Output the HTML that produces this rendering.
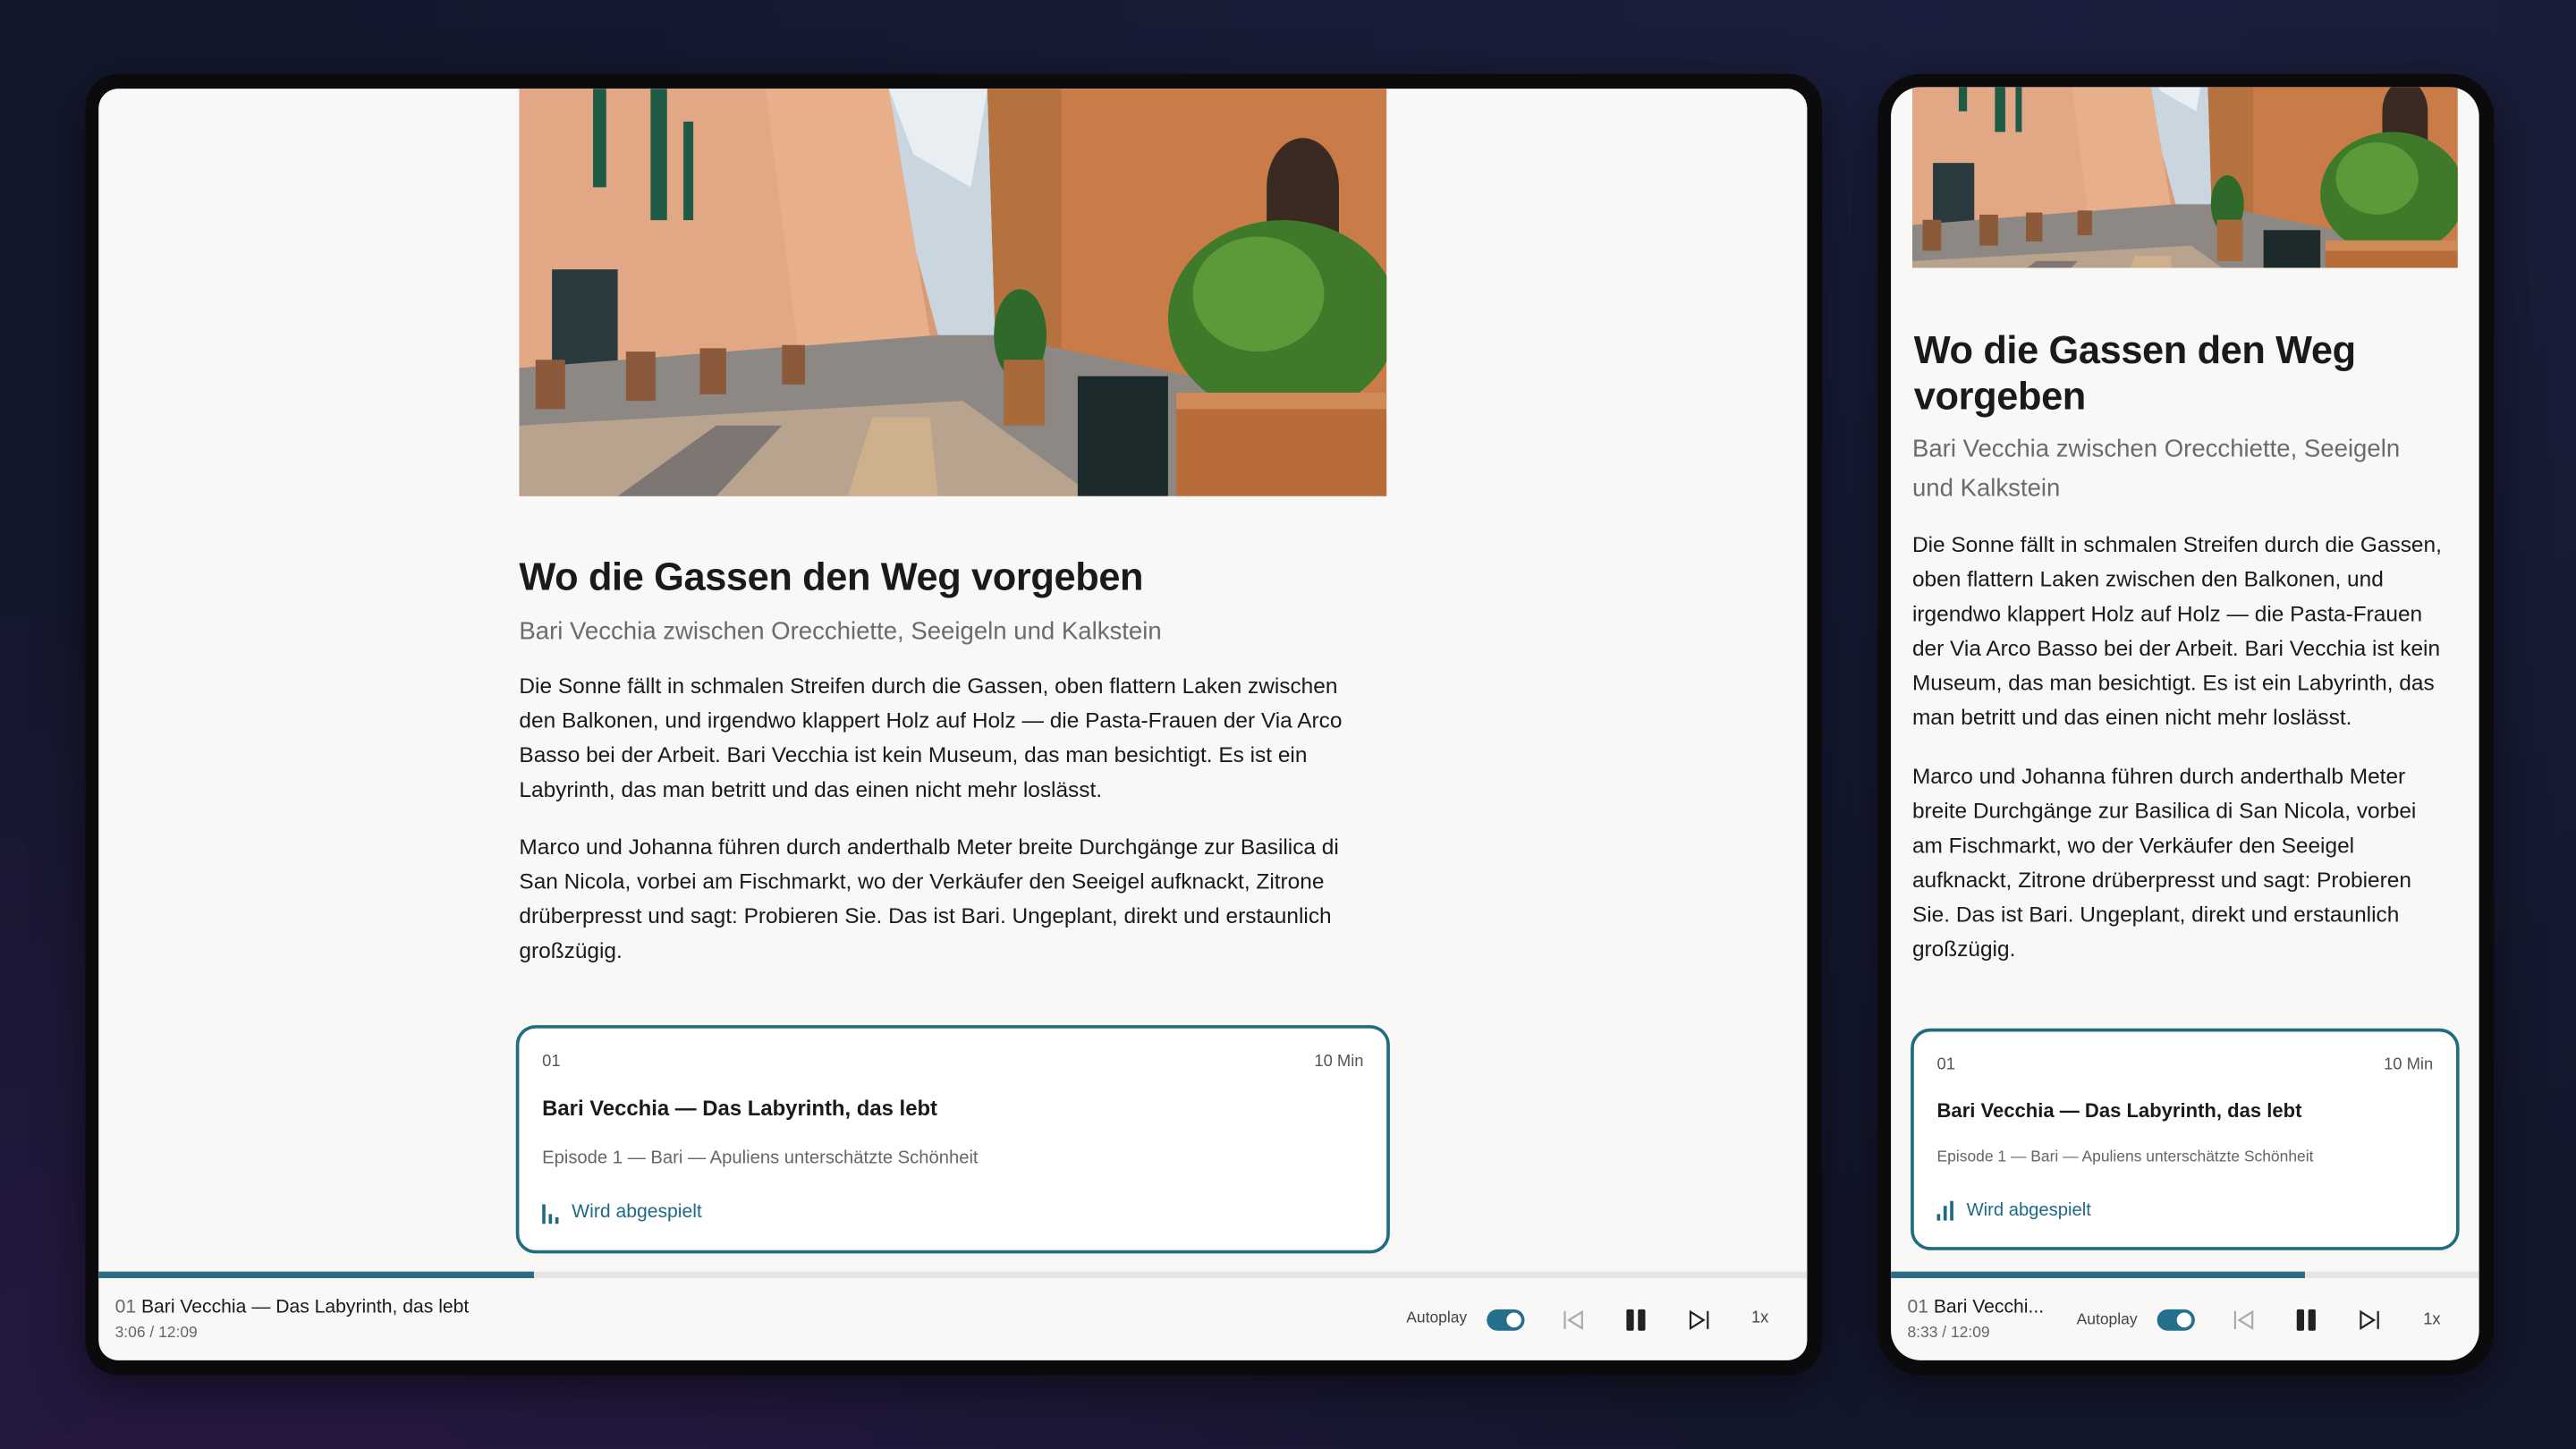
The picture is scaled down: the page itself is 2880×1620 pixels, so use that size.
<!DOCTYPE html>
<html><head><meta charset="utf-8"><style>
*{margin:0;padding:0;box-sizing:border-box}
html,body{width:2880px;height:1620px;overflow:hidden;background:#15182e}
#w{position:absolute;left:0;top:0;width:1568px;height:882px;transform:scale(1.83674);transform-origin:0 0;
background:radial-gradient(ellipse at 10% 110%,#2a1845 0%,rgba(40,24,70,0) 45%),radial-gradient(ellipse at 80% 0%,#1b1f3d 0%,rgba(0,0,0,0) 60%),#14182d;font-family:"Liberation Sans",sans-serif;color:#1a1a1a}
.bez{position:absolute;background:#0b0b0e;border-radius:20px;box-shadow:0 8px 30px rgba(0,0,0,.5)}
.scr{position:absolute;background:#f9f8f6;border-radius:12px;overflow:hidden}
.abs{position:absolute;white-space:nowrap}
.t{font-weight:bold;font-size:23.6px;letter-spacing:-.2px}
.sub{color:#6b6b6b;font-size:15px}
.p{font-size:13.3px;line-height:21px}
.card{position:absolute;border:2px solid #226c82;border-radius:12px;background:#fff}
.teal{color:#1e6a85}
.tog{position:absolute;width:23px;height:13px;border-radius:7px;background:#246f8c}
.tog:after{content:"";position:absolute;right:2px;top:2px;width:9px;height:9px;border-radius:50%;background:#fff}
</style></head><body><div id="w">
<svg width="0" height="0" style="position:absolute"><defs>
<g id="pic">
<rect width="528" height="248" fill="#d99a78"/>
<polygon points="215,0 295,0 290,150 255,150" fill="#c9d6df"/>
<polygon points="225,0 285,0 275,60 240,40" fill="#e9eef2"/>
<polygon points="0,0 225,0 250,150 0,170" fill="#e2a886"/>
<polygon points="150,0 225,0 250,150 170,160" fill="#e8b08a"/>
<rect x="45" y="0" width="8" height="60" fill="#1f5a44"/><rect x="80" y="0" width="10" height="80" fill="#1f5a44"/><rect x="100" y="20" width="6" height="60" fill="#1f5a44"/>
<rect x="20" y="110" width="40" height="80" fill="#2a3a3e"/>
<polygon points="285,0 528,0 528,190 290,160" fill="#c97c48"/>
<polygon points="285,0 330,0 330,170 290,160" fill="#b5723f"/>
<path d="M455 60 a22 30 0 0 1 44 0 v60 h-44z" fill="#3a2a22"/>
<polygon points="0,170 255,150 290,150 528,200 528,248 0,248" fill="#8d8884"/>
<polygon points="0,205 270,190 350,248 0,248" fill="#b8a48e"/>
<polygon points="60,248 120,205 160,205 120,248" fill="#7d7672"/>
<polygon points="200,248 215,200 250,200 255,248" fill="#cfb08c"/>
<rect x="340" y="175" width="55" height="73" fill="#1c2a2c"/>
<ellipse cx="465" cy="140" rx="70" ry="60" fill="#3f7a2a"/><ellipse cx="450" cy="125" rx="40" ry="35" fill="#5a9a38"/>
<rect x="400" y="185" width="128" height="63" fill="#b86c3a"/><rect x="400" y="185" width="128" height="10" fill="#d08a58"/>
<ellipse cx="305" cy="150" rx="16" ry="28" fill="#2f6a2a"/><rect x="295" y="165" width="25" height="40" fill="#a86a3a"/>
<rect x="10" y="165" width="18" height="30" fill="#8a5a3a"/><rect x="65" y="160" width="18" height="30" fill="#8a5a3a"/><rect x="110" y="158" width="16" height="28" fill="#8a5a3a"/><rect x="160" y="156" width="14" height="24" fill="#8a5a3a"/>
</g></defs></svg>

<!-- Left device -->
<div class="bez" style="left:52px;top:45px;width:1057px;height:792px"></div>
<div class="scr" style="left:60px;top:54px;width:1040px;height:774px">
<svg class="abs" style="left:256px;top:0" width="528" height="248" viewBox="0 0 528 248"><use href="#pic"/></svg>
<div class="abs t" style="left:256px;top:285px">Wo die Gassen den Weg vorgeben</div>
<div class="abs sub" style="left:256px;top:322px">Bari Vecchia zwischen Orecchiette, Seeigeln und Kalkstein</div>
<div class="abs p" style="left:256px;top:353px">Die Sonne fällt in schmalen Streifen durch die Gassen, oben flattern Laken zwischen<br>den Balkonen, und irgendwo klappert Holz auf Holz — die Pasta-Frauen der Via Arco<br>Basso bei der Arbeit. Bari Vecchia ist kein Museum, das man besichtigt. Es ist ein<br>Labyrinth, das man betritt und das einen nicht mehr loslässt.</div>
<div class="abs p" style="left:256px;top:451px">Marco und Johanna führen durch anderthalb Meter breite Durchgänge zur Basilica di<br>San Nicola, vorbei am Fischmarkt, wo der Verkäufer den Seeigel aufknackt, Zitrone<br>drüberpresst und sagt: Probieren Sie. Das ist Bari. Ungeplant, direkt und erstaunlich<br>großzügig.</div>
<div class="card" style="left:254px;top:570px;width:532px;height:139px">
<div class="abs" style="left:14px;top:15px;font-size:10px;color:#555">01</div>
<div class="abs" style="right:14px;top:15px;font-size:10px;color:#555">10 Min</div>
<div class="abs" style="left:14px;top:41px;font-size:13px;font-weight:bold">Bari Vecchia — Das Labyrinth, das lebt</div>
<div class="abs" style="left:14px;top:73px;font-size:11px;color:#666">Episode 1 — Bari — Apuliens unterschätzte Schönheit</div>
<svg class="abs" style="left:14px;top:107px" width="12" height="12"><rect x="0" y="0" width="2" height="12" fill="#1e6a85"/><rect x="4" y="6" width="2" height="6" fill="#1e6a85"/><rect x="8" y="8" width="2" height="4" fill="#1e6a85"/></svg>
<div class="abs teal" style="left:32px;top:106px;font-size:11.5px">Wird abgespielt</div>
</div>
<div class="abs" style="left:0;top:720px;width:1040px;height:4px;background:#e6e5e3"></div>
<div class="abs" style="left:0;top:720px;width:265px;height:4px;background:#2a6c86"></div>
<div class="abs" style="left:10px;top:736px;font-size:11.5px"><span style="color:#666">01</span> Bari Vecchia — Das Labyrinth, das lebt</div>
<div class="abs" style="left:10px;top:752px;font-size:9.5px;color:#666">3:06 / 12:09</div>
<div class="abs" style="left:796px;top:743px;font-size:9.5px;color:#444">Autoplay</div>
<div class="tog" style="left:845px;top:743px"></div>
<svg class="abs" style="left:891px;top:743px" width="14" height="13"><path d="M1.5 1v11M12 1.5L4 6.5l8 5z" stroke="#aaa" stroke-width="1.2" fill="none"/></svg>
<svg class="abs" style="left:929px;top:742px" width="14" height="15"><rect x="1" y="1" width="4.5" height="13" rx="1" fill="#222"/><rect x="8" y="1" width="4.5" height="13" rx="1" fill="#222"/></svg>
<svg class="abs" style="left:967px;top:743px" width="14" height="13"><path d="M12.5 1v11M2 1.5l8 5-8 5z" stroke="#222" stroke-width="1.2" fill="none"/></svg>
<div class="abs" style="left:1006px;top:743px;font-size:10px;color:#444">1x</div>
</div>

<!-- Right device -->
<div class="bez" style="left:1143px;top:45px;width:375px;height:792px;border-radius:26px"></div>
<div class="scr" style="left:1151px;top:53px;width:358px;height:775px;border-radius:18px">
<svg class="abs" style="left:13px;top:0" width="332" height="110" viewBox="0 0 528 248" preserveAspectRatio="xMidYMid slice"><use href="#pic"/></svg>
<div class="abs t" style="left:14px;top:147px;line-height:28px">Wo die Gassen den Weg<br>vorgeben</div>
<div class="abs sub" style="left:13px;top:209px;line-height:24px">Bari Vecchia zwischen Orecchiette, Seeigeln<br>und Kalkstein</div>
<div class="abs p" style="left:13px;top:268px">Die Sonne fällt in schmalen Streifen durch die Gassen,<br>oben flattern Laken zwischen den Balkonen, und<br>irgendwo klappert Holz auf Holz — die Pasta-Frauen<br>der Via Arco Basso bei der Arbeit. Bari Vecchia ist kein<br>Museum, das man besichtigt. Es ist ein Labyrinth, das<br>man betritt und das einen nicht mehr loslässt.</div>
<div class="abs p" style="left:13px;top:409px">Marco und Johanna führen durch anderthalb Meter<br>breite Durchgänge zur Basilica di San Nicola, vorbei<br>am Fischmarkt, wo der Verkäufer den Seeigel<br>aufknackt, Zitrone drüberpresst und sagt: Probieren<br>Sie. Das ist Bari. Ungeplant, direkt und erstaunlich<br>großzügig.</div>
<div class="card" style="left:12px;top:573px;width:334px;height:135px">
<div class="abs" style="left:14px;top:15px;font-size:10px;color:#555">01</div>
<div class="abs" style="right:14px;top:15px;font-size:10px;color:#555">10 Min</div>
<div class="abs" style="left:14px;top:41px;font-size:12px;font-weight:bold">Bari Vecchia — Das Labyrinth, das lebt</div>
<div class="abs" style="left:14px;top:71px;font-size:9.5px;color:#666">Episode 1 — Bari — Apuliens unterschätzte Schönheit</div>
<svg class="abs" style="left:14px;top:103px" width="12" height="12"><rect x="0" y="8" width="2" height="4" fill="#1e6a85"/><rect x="4" y="3" width="2" height="9" fill="#1e6a85"/><rect x="8" y="0" width="2" height="12" fill="#1e6a85"/></svg>
<div class="abs teal" style="left:32px;top:103px;font-size:11px">Wird abgespielt</div>
</div>
<div class="abs" style="left:0;top:721px;width:358px;height:4px;background:#e6e5e3"></div>
<div class="abs" style="left:0;top:721px;width:252px;height:4px;background:#2a6c86"></div>
<div class="abs" style="left:10px;top:737px;font-size:11.5px"><span style="color:#666">01</span> Bari Vecchi...</div>
<div class="abs" style="left:10px;top:753px;font-size:9.5px;color:#666">8:33 / 12:09</div>
<div class="abs" style="left:113px;top:745px;font-size:9.5px;color:#444">Autoplay</div>
<div class="tog" style="left:162px;top:744px"></div>
<svg class="abs" style="left:208px;top:744px" width="14" height="13"><path d="M1.5 1v11M12 1.5L4 6.5l8 5z" stroke="#aaa" stroke-width="1.2" fill="none"/></svg>
<svg class="abs" style="left:246px;top:743px" width="14" height="15"><rect x="1" y="1" width="4.5" height="13" rx="1" fill="#222"/><rect x="8" y="1" width="4.5" height="13" rx="1" fill="#222"/></svg>
<svg class="abs" style="left:284px;top:744px" width="14" height="13"><path d="M12.5 1v11M2 1.5l8 5-8 5z" stroke="#222" stroke-width="1.2" fill="none"/></svg>
<div class="abs" style="left:324px;top:745px;font-size:10px;color:#444">1x</div>
</div>
</div></body></html>
